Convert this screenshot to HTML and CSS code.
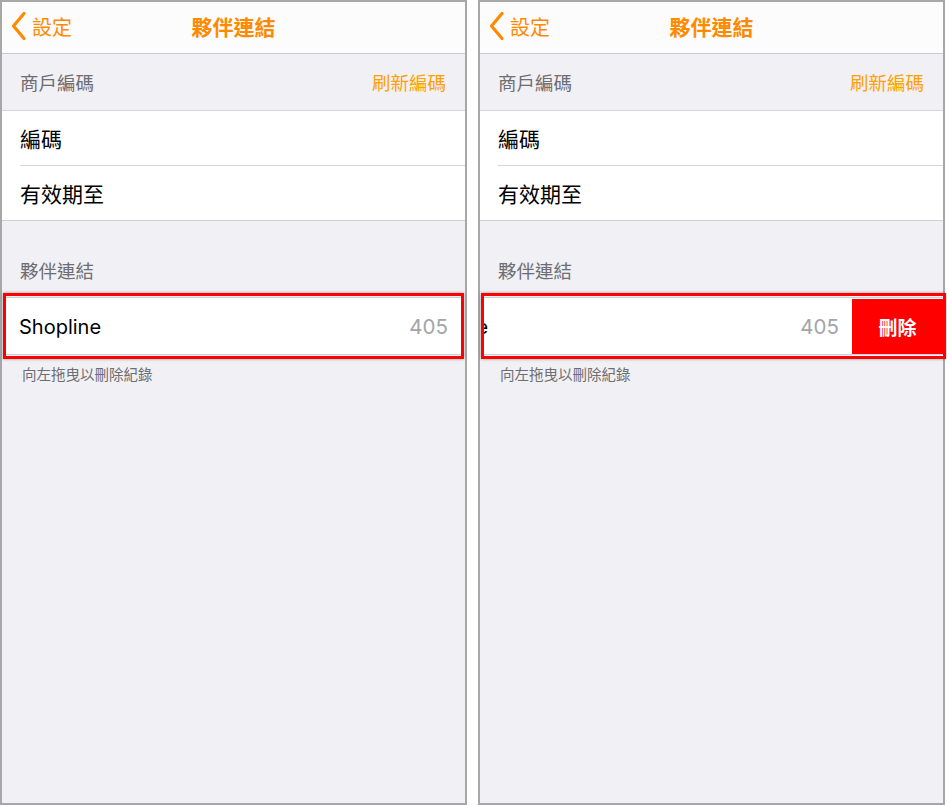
FILE: index.html
```html
<!doctype html>
<html>
<head>
<meta charset="utf-8">
<title>夥伴連結</title>
<link rel="stylesheet" href="styles.css">
</head>
<body>

<div class="screens">

<!-- ===== screen 1 : normal ===== -->
<div class="phone">
  <div class="nav">
    <a class="back" href="#">
      <svg width="16" height="28" viewBox="0 0 16 28"><path d="M13 1.5 L2.5 14 L13 26.5" fill="none" stroke="#ff8a00" stroke-width="3.2" stroke-linecap="round" stroke-linejoin="round"/></svg>
      <span>設定</span>
    </a>
    <div class="title">夥伴連結</div>
    <div></div>
  </div>

  <div class="head">
    <span>商戶編碼</span>
    <a class="action" href="#">刷新編碼</a>
  </div>
  <div class="group">
    <div class="cell"><span>編碼</span></div>
    <div class="cell"><span>有效期至</span></div>
  </div>

  <div class="head head-tall">
    <span>夥伴連結</span>
  </div>
  <div class="mark">
    <div class="group swipe">
      <div class="track">
        <div class="item">
          <span class="name">Shopline</span>
          <span class="value">405</span>
        </div>
      </div>
    </div>
  </div>
  <div class="note">向左拖曳以刪除紀錄</div>
</div>

<!-- ===== screen 2 : swiped ===== -->
<div class="phone">
  <div class="nav">
    <a class="back" href="#">
      <svg width="16" height="28" viewBox="0 0 16 28"><path d="M13 1.5 L2.5 14 L13 26.5" fill="none" stroke="#ff8a00" stroke-width="3.2" stroke-linecap="round" stroke-linejoin="round"/></svg>
      <span>設定</span>
    </a>
    <div class="title">夥伴連結</div>
    <div></div>
  </div>

  <div class="head">
    <span>商戶編碼</span>
    <a class="action" href="#">刷新編碼</a>
  </div>
  <div class="group">
    <div class="cell"><span>編碼</span></div>
    <div class="cell"><span>有效期至</span></div>
  </div>

  <div class="head head-tall">
    <span>夥伴連結</span>
  </div>
  <div class="mark mark-wide">
    <div class="group swipe">
      <div class="track open">
        <div class="item">
          <span class="name">Shopline</span>
          <span class="value">405</span>
        </div>
        <div class="delete">刪除</div>
      </div>
    </div>
  </div>
  <div class="note">向左拖曳以刪除紀錄</div>
</div>

</div>

</body>
</html>
```

FILE: styles.css
```css
body {
  margin: 0 ;
  background-color: #FFFFFF ;
  font-family: Inter, "Noto Sans CJK TC", sans-serif ;
  color: #000000 ;
}

a {
  text-decoration: none ;
}

.screens {
  display: flex ;
  gap: 11px ;
}

.phone {
  width: 463px ;
  height: 801px ;
  border: 2px solid #a7a7a7 ;
  background-color: #f1f0f5 ;
}

/* navigation bar */

.nav {
  height: 48px ;
  padding-bottom: 3px ;
  display: grid ;
  grid-template-columns: 1fr auto 1fr ;
  align-items: center ;
  background-color: #fcfcfc ;
  border-bottom: 1px solid #cbcad0 ;
}

.back {
  display: flex ;
  align-items: center ;
  gap: 5px ;
  padding-left: 9px ;
  color: #ff8a00 ;
  font-size: 20px ;
}

.back svg {
  display: block ;
}

.title {
  color: #ff8a00 ;
  font-size: 21px ;
  font-weight: 700 ;
}

/* section headers */

.head {
  height: 56px ;
  padding: 0 19px 0 18px ;
  display: flex ;
  align-items: center ;
  justify-content: space-between ;
  color: #6d6d72 ;
  font-size: 18.5px ;
  border-bottom: 1px solid #d6d5da ;
}

.head-tall {
  height: 62px ;
  align-items: flex-end ;
  padding-bottom: 10px ;
  border-bottom: 0 ;
}

.action {
  color: #ffa100 ;
}

/* table groups */

.group {
  background-color: #FFFFFF ;
  border-bottom: 1px solid #cfced3 ;
}

.cell {
  height: 54px ;
  margin-left: 18px ;
  display: flex ;
  align-items: center ;
  font-size: 21px ;
}

.cell + .cell {
  border-top: 1px solid #d6d5da ;
}

/* red annotation box */

.mark {
  margin: 0 1px ;
  padding: 1px 0 ;
  border: 3px solid #ff0000 ;
  box-shadow: 0 0 3px rgba(0, 0, 0, 0.35) ;
}

.mark-wide {
  margin-right: -3px ;
}

.swipe {
  overflow: hidden ;
  border-top: 1px solid #cfced3 ;
}

.track {
  display: flex ;
  height: 55px ;
  padding-top: 1px ;
}

.track.open {
  margin-left: -91px ;
}

.item {
  flex: 1 1 auto ;
  display: flex ;
  align-items: center ;
  justify-content: space-between ;
  padding: 0 13px 0 13px ;
}

.name {
  font-size: 20px ;
}

.value {
  color: #a4a4a8 ;
  font-size: 20.5px ;
}

.delete {
  flex: 0 0 91px ;
  display: flex ;
  align-items: center ;
  justify-content: center ;
  background-color: #ff0000 ;
  color: #FFFFFF ;
  font-size: 19px ;
  font-weight: 700 ;
}

.note {
  padding: 4px 0 0 20px ;
  color: #6d6d72 ;
  font-size: 14.5px ;
}
```
